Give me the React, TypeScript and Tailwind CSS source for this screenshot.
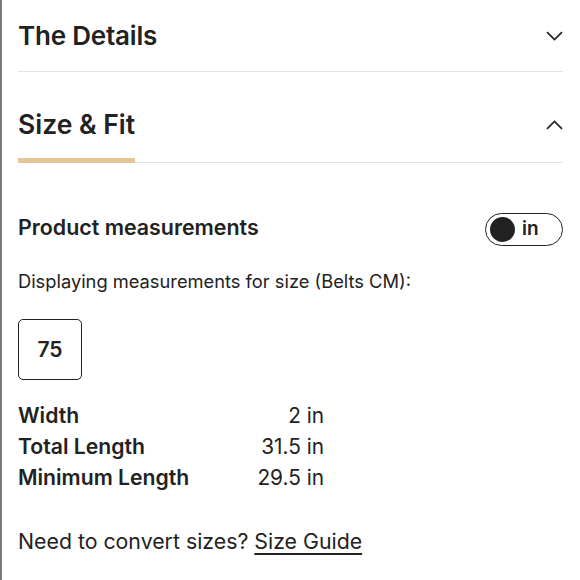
import React from "react";

function ChevronDown() {
  return (
    <svg width="17" height="10" viewBox="0 0 17 10" fill="none">
      <path d="M1 1.2 L8.5 8.5 L16 1.2" stroke="#222" strokeWidth="1.7" />
    </svg>
  );
}
function ChevronUp() {
  return (
    <svg width="17" height="10" viewBox="0 0 17 10" fill="none">
      <path d="M1 8.8 L8.5 1.5 L16 8.8" stroke="#222" strokeWidth="1.7" />
    </svg>
  );
}

export default function App() {
  const rows = [
    ["Width", "2 in"],
    ["Total Length", "31.5 in"],
    ["Minimum Length", "29.5 in"],
  ];
  return (
    <div className="w-[580px] h-[580px] bg-white border-l-2 border-[#7a7a7a] text-[#222] font-['Inter',sans-serif] overflow-hidden">
      <div className="pl-[16px] pr-[17px]">
        <div className="h-[72px] flex items-center justify-between border-b border-[#e2e2e2]">
          <span className="text-[26px] font-semibold tracking-[-0.2px]">The Details</span>
          <ChevronDown />
        </div>
        <div className="h-[40px] mt-[33px] flex items-center justify-between">
          <span className="text-[26.5px] font-semibold">Size &amp; Fit</span>
          <ChevronUp />
        </div>
        <div className="mt-[13px] flex items-end">
          <div className="w-[117px] h-[5px] bg-[#e6c596]" />
          <div className="flex-1 h-[1.5px] bg-[#e2e2e2]" />
        </div>
        <div className="mt-[50px] flex items-center justify-between">
          <span className="text-[21.4px] font-semibold -mt-[5px]">Product measurements</span>
          <div className="w-[78px] h-[33px] rounded-full border-[1.5px] border-[#222] flex items-center pl-[4px] gap-[7px]">
            <div className="w-[25px] h-[25px] rounded-full bg-[#222]" />
            <span className="text-[19px] font-semibold">in</span>
          </div>
        </div>
        <div className="mt-[23px] text-[18.3px] leading-[24px]">Displaying measurements for size (Belts CM):</div>
        <div className="mt-[26px] w-[64px] h-[61px] rounded-[5px] border-[1.5px] border-[#222] flex items-center justify-center text-[21px] font-semibold">
          75
        </div>
        <div className="mt-[20px] w-[306px] flex flex-col">
          {rows.map(([k, v]) => (
            <div key={k} className="h-[31px] flex items-center justify-between">
              <span className="font-semibold text-[21.2px]">{k}</span>
              <span className="text-[20.8px]">{v}</span>
            </div>
          ))}
        </div>
        <div className="mt-[33px] text-[21.3px]">
          Need to convert sizes?{" "}
          <span className="underline underline-offset-[4px] decoration-[1.5px]">Size Guide</span>
        </div>
      </div>
    </div>
  );
}
